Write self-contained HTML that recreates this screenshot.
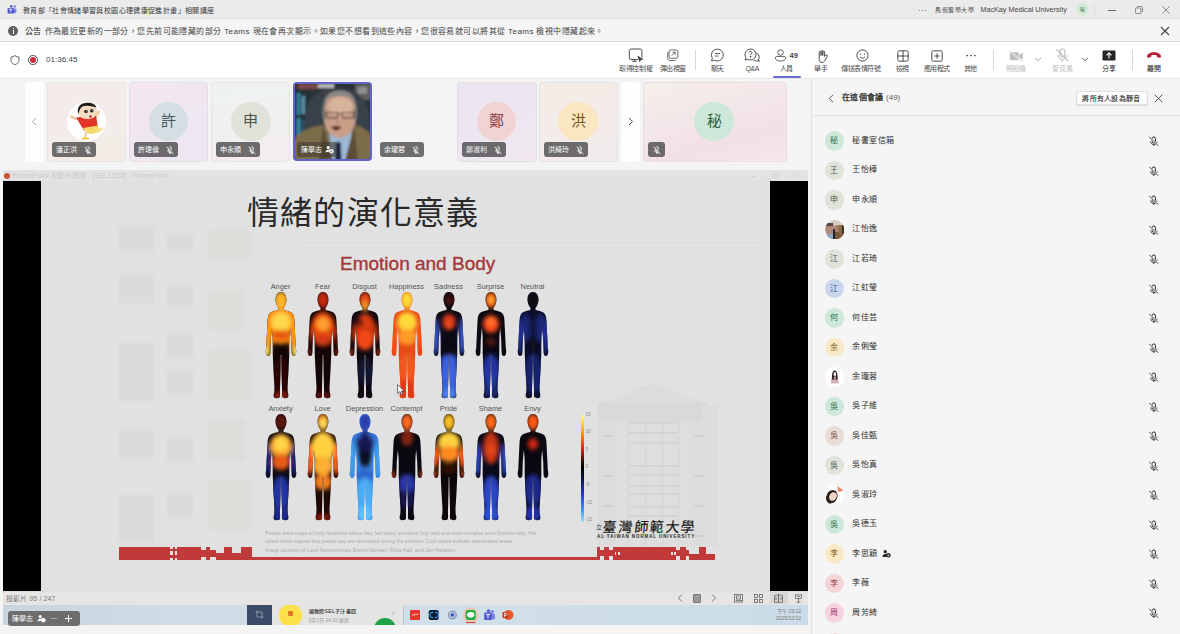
<!DOCTYPE html>
<html lang="zh-TW">
<head>
<meta charset="utf-8">
<style>
*{box-sizing:border-box;margin:0;padding:0}
html,body{width:1180px;height:634px;overflow:hidden;background:#f5f5f5;font-family:"Liberation Sans",sans-serif;color:#242424}
.a{position:absolute}
.t{white-space:nowrap;line-height:1}
/* title bar */
#titlebar{left:0;top:0;width:1180px;height:19px;background:#ebebeb;border-bottom:1px solid #e0e0e0}
#ann{left:0;top:19px;width:1180px;height:23px;background:#f5f5f5;border-bottom:1px solid #d6d6d6}
#tool{left:0;top:42px;width:1180px;height:37px;background:#fff;border-bottom:1px solid #e6e6e6}
#stage{left:0;top:79px;width:811px;height:555px;background:#f4f4f4}
#panel{left:811px;top:79px;width:369px;height:555px;background:#f5f5f5;border-left:1px solid #e3e3e3}
.lbl{font-size:7px;letter-spacing:-0.45px;text-indent:-0.45px;color:#4a4a4a;text-align:center;width:60px;margin-left:-30px}
.ico{width:16px;height:14px;margin-left:-8px}
.tile{position:absolute;top:82px;height:79.5px;border-radius:4px;overflow:hidden;border:1px solid rgba(0,0,0,0.04)}
.av{position:absolute;border-radius:50%;text-align:center;font-family:"Liberation Sans",sans-serif}
.pill{position:absolute;top:142px;height:14.5px;border-radius:3px;background:rgba(70,70,70,0.78);color:#fff;font-size:7px;line-height:16px;padding-left:4px;white-space:nowrap}
.mic{position:absolute}
.row{position:absolute;left:0;width:369px;height:29.5px}
.row .av{left:12.5px;top:5px;width:19.5px;height:19.5px;line-height:19px;font-size:8px}
.row .nm{position:absolute;left:40px;top:10.8px;font-size:8px;letter-spacing:0.6px;color:#2b2b2b;white-space:nowrap;line-height:1}

</style>
</head>
<body>
<!-- TITLE BAR -->
<div id="titlebar" class="a">
  <svg class="a" style="left:7px;top:5px" width="10" height="9" viewBox="0 0 10 9">
    <circle cx="7.8" cy="1.5" r="1.2" fill="#7b83eb"/>
    <path d="M6.2 3.5H9.4V6.5C9.4 7.6 8.6 8.4 7.6 8.4C6.8 8.4 6.2 7.8 6.2 7Z" fill="#7b83eb"/>
    <circle cx="4.3" cy="1.4" r="1.3" fill="#5b5fc7"/>
    <path d="M0.6 3.2H7V7.4C7 8 6.5 8.6 5.9 8.6H1.7C1.1 8.6 0.6 8 0.6 7.4Z" fill="#4f55c4"/>
    <path d="M2.3 4.6H5.2M3.75 4.6V7.4" stroke="#fff" stroke-width="0.8"/>
  </svg>
  <div class="a t" style="left:22.8px;top:6.5px;font-size:7px;letter-spacing:0.37px;color:#333">教育部「社會情緒學習與校園心理健康促進計畫」相關講座</div>
  <div class="a t" style="left:918px;top:6.5px;font-size:8px;color:#333;letter-spacing:0.3px">···</div>
  <div class="a t" style="left:935.3px;top:6.8px;font-size:6px;letter-spacing:0.5px;color:#444">馬偕醫學大學</div><div class="a t" style="left:980.5px;top:6px;font-size:7.2px;color:#444">MacKay Medical University</div><div class="a" style="left:1094px;top:4px;width:1px;height:11px;background:#dcdcdc"></div>
  <div class="a" style="left:1076px;top:3px;width:13px;height:13px;border-radius:50%;background:#d3eadb;font-size:5px;color:#2f6b46;text-align:center;line-height:13px">秘</div>
  <div class="a" style="left:1108px;top:9.5px;width:8px;height:0.8px;background:#666"></div>
  <svg class="a" style="left:1135px;top:6px" width="8" height="8" viewBox="0 0 8 8" fill="none" stroke="#777" stroke-width="0.8"><rect x="0.5" y="2" width="5.5" height="5.5" rx="0.8"/><path d="M2 2V1.5C2 0.9 2.4 0.5 3 0.5H6.5C7.1 0.5 7.5 0.9 7.5 1.5V5C7.5 5.6 7.1 6 6.5 6H6"/></svg>
  <svg class="a" style="left:1162px;top:5.5px" width="8" height="8" viewBox="0 0 8 8"><path d="M0.5 0.5L7.5 7.5M7.5 0.5L0.5 7.5" stroke="#777" stroke-width="0.8"/></svg>
</div>

<!-- ANNOUNCEMENT -->
<div id="ann" class="a">
  <div class="a" style="left:8px;top:7px;width:10px;height:10px;border-radius:50%;background:#616161"></div>
  <div class="a" style="left:12.5px;top:9px;width:1.2px;height:1.2px;background:#fff"></div>
  <div class="a" style="left:12.5px;top:11px;width:1.2px;height:4px;background:#fff"></div>
  <div class="a t" style="left:25px;top:9.2px;font-size:8px;letter-spacing:0.3px;color:#242424">公告</div>
  <div class="a t" style="left:44.5px;top:9.2px;font-size:8px;letter-spacing:0.43px;color:#424242">作為最近更新的一部分，您先前可能隱藏的部分 Teams 現在會再次顯示。如果您不想看到這些內容，您很容易就可以將其從 Teams 檢視中隱藏起來。</div>
  <svg class="a" style="left:1160px;top:7px" width="10" height="10" viewBox="0 0 10 10"><path d="M1 1L9 9M9 1L1 9" stroke="#444" stroke-width="1.1"/></svg>
</div>

<!-- TOOLBAR -->
<div id="tool" class="a">
  <svg class="a" style="left:9.5px;top:13px" width="10" height="10" viewBox="0 0 10 10"><path d="M5 0.6C6.2 1.5 7.6 2 9 2.1V5C9 7.3 7.5 8.8 5 9.6C2.5 8.8 1 7.3 1 5V2.1C2.4 2 3.8 1.5 5 0.6Z" fill="none" stroke="#555" stroke-width="0.9"/></svg>
  <div class="a" style="left:28px;top:13.2px;width:9.6px;height:9.6px;border-radius:50%;border:1.1px solid #4a4a4a"></div>
  <div class="a" style="left:29.6px;top:14.8px;width:6.4px;height:6.4px;border-radius:50%;background:#d0283c"></div>
  <div class="a t" style="left:46px;top:14px;font-size:8.1px;color:#424242">01:36:45</div>
  <!-- buttons -->
  <svg class="a" style="left:628px;top:6px" width="17" height="15" viewBox="0 0 17 15" fill="none" stroke="#424242" stroke-width="0.95">
    <rect x="1.3" y="1" width="12.6" height="10.5" rx="1.8"/><path d="M4.3 13.3H8.7M6.5 11.5V13.3"/>
    <path d="M9.2 7.6L15.6 11.3L12.9 11.9L11.7 14.5Z" fill="#424242" stroke="#fff" stroke-width="1.2" stroke-linejoin="round"/>
    <path d="M9.2 7.6L15.6 11.3L12.9 11.9L11.7 14.5Z" fill="#424242" stroke="none"/>
  </svg>
  <div class="a t lbl" style="left:636px;top:23px">取得控制權</div>
  <svg class="a" style="left:666px;top:7px" width="14" height="12.5" viewBox="0 0 16 14" fill="none" stroke="#424242" stroke-width="0.9">
    <rect x="3.5" y="1" width="10" height="9.5" rx="2"/><path d="M2 3.5V10.5C2 12 3 13 4.5 13H11"/><path d="M6.5 7.5L10.5 3.5M7.5 3.5H10.5V6.5"/>
  </svg>
  <div class="a t lbl" style="left:673px;top:23px">彈出視窗</div>
  <div class="a" style="left:695px;top:8px;width:1px;height:20px;background:#d6d6d6"></div>
  <svg class="a" style="left:710px;top:6px" width="15" height="14" viewBox="0 0 15 14" fill="none" stroke="#424242" stroke-width="0.9">
    <path d="M7.5 1A6 6 0 1 1 4.5 12.3L1.5 13L2.3 10.2A6 6 0 0 1 7.5 1Z"/><path d="M5 5.5H10M5 8H8.5"/>
  </svg>
  <div class="a t lbl" style="left:717.5px;top:23px">聊天</div>
  <svg class="a" style="left:744px;top:6px" width="17" height="14" viewBox="0 0 17 14" fill="none" stroke="#424242" stroke-width="0.9">
    <path d="M6.5 1A5.5 5.5 0 1 1 3.8 11.3L1.2 12L1.9 9.6A5.5 5.5 0 0 1 6.5 1Z"/><path d="M5 4.8C5 3.9 5.7 3.3 6.5 3.3S8 3.9 8 4.7C8 5.7 6.6 5.8 6.6 7"/><circle cx="6.6" cy="8.7" r="0.5" fill="#424242"/>
    <path d="M12.3 5A4.5 4.5 0 0 1 14 12.3L15.5 13L12.8 13C11.8 13 10.5 12.6 9.5 12"/>
  </svg>
  <div class="a t lbl" style="left:752.5px;top:23px">Q&amp;A</div>
  <svg class="a" style="left:774px;top:7px" width="13" height="13" viewBox="0 0 14 14" fill="none" stroke="#424242" stroke-width="0.9">
    <circle cx="7" cy="3.8" r="3"/><path d="M1.5 9.5C1.5 8.7 2.2 8 3 8H11C11.8 8 12.5 8.7 12.5 9.5C12.5 11.8 10.3 13 7 13S1.5 11.8 1.5 9.5Z"/>
  </svg>
  <div class="a t" style="left:789.5px;top:9.8px;font-size:7.5px;color:#424242;font-weight:bold">49</div>
  <div class="a t lbl" style="left:786.3px;top:23px">人員</div>
  <div class="a" style="left:773px;top:34.2px;width:28px;height:1.6px;background:#6a6ed0;border-radius:1px"></div>

  <svg class="a" style="left:815.5px;top:7.5px" width="13" height="13" viewBox="0 0 13 13" fill="none" stroke="#424242" stroke-width="0.95" stroke-linejoin="round">
    <path d="M3.2 7V2.2C3.2 1.6 3.6 1.2 4.1 1.2S5 1.6 5 2.2V5.5V1.4C5 0.9 5.4 0.5 5.9 0.5S6.8 0.9 6.8 1.4V5.5V2C6.8 1.5 7.2 1.1 7.7 1.1S8.6 1.5 8.6 2V6.5L9.6 5.2C10 4.7 10.7 4.7 11.1 5.1C11.4 5.4 11.4 5.9 11.2 6.3L9 10.6C8.3 11.8 7.2 12.5 5.9 12.5C4.3 12.5 3.2 11.2 3.2 9.6Z"/>
  </svg>
  <div class="a t lbl" style="left:821px;top:23px">舉手</div>
  <svg class="a" style="left:855.5px;top:7.2px" width="13" height="13" viewBox="0 0 13 13" fill="none" stroke="#424242" stroke-width="0.95">
    <circle cx="6.5" cy="6.5" r="5.6"/><circle cx="4.6" cy="5.2" r="0.6" fill="#424242" stroke="none"/><circle cx="8.4" cy="5.2" r="0.6" fill="#424242" stroke="none"/><path d="M4.1 7.9C4.7 8.8 5.5 9.2 6.5 9.2S8.3 8.8 8.9 7.9"/>
  </svg>
  <div class="a t lbl" style="left:861px;top:23px">傳送表情符號</div>
  <svg class="a" style="left:896.5px;top:8px" width="12" height="12" viewBox="0 0 12 12" fill="none" stroke="#424242" stroke-width="0.95">
    <rect x="0.8" y="0.8" width="10.4" height="10.4" rx="1.6"/><path d="M6 0.8V11.2M0.8 6H11.2"/>
  </svg>
  <div class="a t lbl" style="left:902.4px;top:23px">檢視</div>
  <svg class="a" style="left:931px;top:8px" width="12" height="12" viewBox="0 0 12 12" fill="none" stroke="#424242" stroke-width="0.95">
    <rect x="0.8" y="0.8" width="10.4" height="10.4" rx="1.6"/><path d="M6 3.4V8.6M3.4 6H8.6"/>
  </svg>
  <div class="a t lbl" style="left:937px;top:23px">應用程式</div>
  <svg class="a" style="left:966px;top:12.2px" width="10" height="3" viewBox="0 0 10 3"><circle cx="1.2" cy="1.5" r="0.85" fill="#424242"/><circle cx="5" cy="1.5" r="0.85" fill="#424242"/><circle cx="8.8" cy="1.5" r="0.85" fill="#424242"/></svg>
  <div class="a t lbl" style="left:970.7px;top:23px">其他</div>
  <div class="a" style="left:993px;top:8px;width:1px;height:20px;background:#d6d6d6"></div>
  <svg class="a" style="left:1009px;top:7.5px" width="15" height="12.5" viewBox="0 0 17 14">
    <rect x="1" y="2.5" width="10" height="9" rx="1.5" fill="#bdbdbd"/><path d="M11.5 5.5L15.5 3V11L11.5 8.5Z" fill="#bdbdbd"/><path d="M1 1L15 13" stroke="#fff" stroke-width="1.6"/><path d="M1 1L15 13" stroke="#bdbdbd" stroke-width="0.9"/>
  </svg>
  <div class="a t lbl" style="left:1015.8px;top:23px;color:#bdbdbd">照相機</div>
  <svg class="a" style="left:1034px;top:15px" width="8" height="5" viewBox="0 0 8 5"><path d="M1 1L4 3.6L7 1" fill="none" stroke="#9a9a9a" stroke-width="0.9"/></svg>
  <svg class="a" style="left:1055px;top:6px" width="15" height="15" viewBox="0 0 15 15" fill="none" stroke="#bdbdbd" stroke-width="1.1">
    <rect x="5" y="1" width="5" height="8" rx="2.5"/><path d="M3 7C3 9.5 5 11.5 7.5 11.5S12 9.5 12 7M7.5 11.5V14"/><path d="M1.5 1.5L13.5 13.5"/>
  </svg>
  <div class="a t lbl" style="left:1062.5px;top:23px;color:#bdbdbd">麥克風</div>
  <svg class="a" style="left:1081px;top:15px" width="8" height="5" viewBox="0 0 8 5"><path d="M1 1L4 3.6L7 1" fill="none" stroke="#555" stroke-width="0.9"/></svg>
  <svg class="a" style="left:1102px;top:8px" width="14" height="11" viewBox="0 0 14 11">
    <rect x="0.5" y="0.5" width="13" height="10" rx="1.2" fill="#242424"/><path d="M7 8.5V3M4.5 5.3L7 2.8L9.5 5.3" fill="none" stroke="#fff" stroke-width="1.1"/>
  </svg>
  <div class="a t lbl" style="left:1109px;top:23px;color:#242424">分享</div>
  <div class="a" style="left:1131.5px;top:8px;width:1px;height:20px;background:#d6d6d6"></div>
  <svg class="a" style="left:1146px;top:9px" width="16" height="8" viewBox="0 0 16 8">
    <path d="M1 5.2C1 3.3 4 1.2 8 1.2S15 3.3 15 5.2C15 6.2 14.5 6.8 13.8 6.7L11.5 6.3C10.9 6.2 10.6 5.7 10.6 5.1V4.3C9.1 3.9 6.9 3.9 5.4 4.3V5.1C5.4 5.7 5.1 6.2 4.5 6.3L2.2 6.7C1.5 6.8 1 6.2 1 5.2Z" fill="#b92434"/>
  </svg>
  <div class="a t lbl" style="left:1154px;top:23px;color:#242424">離開</div>
</div>

<!-- STAGE -->
<div id="stage" class="a"></div>
<!--STRIP-->
<div class="a" style="left:25px;top:82px;width:19px;height:79.5px;background:#fdfdfd;border-radius:3px"></div>
<svg class="a" style="left:31px;top:117px" width="6" height="9" viewBox="0 0 6 9"><path d="M5 1L1.5 4.5L5 8" fill="none" stroke="#9e9e9e" stroke-width="0.9"/></svg>
<div class="tile" style="left:47px;width:78.5px;background:linear-gradient(160deg,#f5ece9 0%,#f3ecea 50%,#f3ede4 100%)"></div>
<div class="av" style="left:67px;top:102px;width:39px;height:39px;background:#fff"></div>
<svg class="a" style="left:67px;top:102px" width="39" height="39" viewBox="0 0 39 39">
  <path d="M9 17L4 14.5" stroke="#f2cfa8" stroke-width="2.6" stroke-linecap="round"/>
  <path d="M28 16L32 9.5" stroke="#f2cfa8" stroke-width="2.6" stroke-linecap="round"/>
  <path d="M9 15.5L29 13.5L31 26L17 28.5L13 22Z" fill="#e3342c"/>
  <path d="M16 26L31 23.5L33 30L24 32L20 31Z" fill="#f3da6a"/>
  <path d="M19 30L18 36" stroke="#f2cfa8" stroke-width="2.2"/>
  <path d="M16 36.5H21" stroke="#f4c838" stroke-width="2.2" stroke-linecap="round"/>
  <path d="M30 29L35 27" stroke="#f2e080" stroke-width="2.4" stroke-linecap="round"/>
  <path d="M11 9C11 3.5 15.5 1 20.5 1C26 1 30 4 30 9C30 14.5 26 17 20.5 17C15 17 11 14.5 11 9Z" fill="#f6dcc0"/>
  <path d="M10.8 10C10.5 4 14 1 20 0.8C25 0.6 28.5 2.5 29.5 5.5C27 4.5 24.5 4.6 22 4C18 3.5 15 4 13.5 6.5C12.5 8 12 9.5 11.5 12Z" fill="#1e1e1e"/>
  <ellipse cx="19" cy="9.4" rx="1.8" ry="1.7" fill="#1e1e1e"/><ellipse cx="24.8" cy="8.8" rx="1.8" ry="1.7" fill="#1e1e1e"/>
  <circle cx="19.3" cy="9" r="0.5" fill="#fff"/><circle cx="25.1" cy="8.4" r="0.5" fill="#fff"/>
  <ellipse cx="23.5" cy="14.5" rx="1.1" ry="1.5" fill="#b8282a"/>
</svg>
<div class="pill" style="left:52px;width:43.5px">潘正洪<div class="a" style="left:31.5px;top:3px"><svg width="8" height="9" viewBox="0 0 8 9" fill="none" stroke="#fff" stroke-width="0.9"><path d="M3 1.3C3.3 0.8 3.6 0.6 4 0.6C4.7 0.6 5.2 1.2 5.2 1.9V4.3M2.8 3V4.3C2.8 5 3.3 5.5 4 5.5"/><path d="M1.8 4.3C1.8 5.6 2.8 6.6 4 6.6C4.6 6.6 5.1 6.4 5.5 6M4 6.6V8.2"/><path d="M0.8 0.8L7.2 8.2"/></svg></div></div>

<div class="tile" style="left:128.8px;width:79.2px;background:linear-gradient(135deg,#f6e7f2 0%,#f0e6f0 45%,#ece8f2 100%)"></div>
<div class="av" style="left:148.5px;top:101.5px;width:39.5px;height:39.5px;line-height:37.8px;background:#d4dfe4;color:#44565f;font-size:15px">許</div>
<div class="pill" style="left:133.5px;width:44px">許瑋倫<div class="a" style="left:32px;top:3px"><svg width="8" height="9" viewBox="0 0 8 9" fill="none" stroke="#fff" stroke-width="0.9"><path d="M3 1.3C3.3 0.8 3.6 0.6 4 0.6C4.7 0.6 5.2 1.2 5.2 1.9V4.3M2.8 3V4.3C2.8 5 3.3 5.5 4 5.5"/><path d="M1.8 4.3C1.8 5.6 2.8 6.6 4 6.6C4.6 6.6 5.1 6.4 5.5 6M4 6.6V8.2"/><path d="M0.8 0.8L7.2 8.2"/></svg></div></div>

<div class="tile" style="left:211px;width:79px;background:linear-gradient(175deg,#eef2f3 0%,#f0f0f0 50%,#f4ebee 100%)"></div>
<div class="av" style="left:231px;top:101.5px;width:39.5px;height:39.5px;line-height:37.8px;background:#dfe3d9;color:#485446;font-size:15px">申</div>
<div class="pill" style="left:216px;width:44px">申永順<div class="a" style="left:32px;top:3px"><svg width="8" height="9" viewBox="0 0 8 9" fill="none" stroke="#fff" stroke-width="0.9"><path d="M3 1.3C3.3 0.8 3.6 0.6 4 0.6C4.7 0.6 5.2 1.2 5.2 1.9V4.3M2.8 3V4.3C2.8 5 3.3 5.5 4 5.5"/><path d="M1.8 4.3C1.8 5.6 2.8 6.6 4 6.6C4.6 6.6 5.1 6.4 5.5 6M4 6.6V8.2"/><path d="M0.8 0.8L7.2 8.2"/></svg></div></div>

<div class="a" style="left:292.5px;top:82.2px;width:79.4px;height:78.6px;border:2px solid #6264c9;border-radius:4px;overflow:hidden;background:#2e333a">
<svg class="a" style="left:0;top:0" width="76" height="75" viewBox="0 0 76 75">
<defs><filter id="vb" x="-20%" y="-20%" width="140%" height="140%"><feGaussianBlur stdDeviation="0.8"/></filter></defs>
<g filter="url(#vb)">
<rect x="-2" y="-2" width="80" height="79" fill="#2c3036"/>
<rect x="0" y="6" width="14" height="60" fill="#283038"/>
<rect x="1.5" y="9" width="4" height="22" fill="#2f7e9a"/><rect x="6.5" y="12" width="3.5" height="18" fill="#5b8ea4"/>
<rect x="1.5" y="34" width="4" height="22" fill="#3588a6"/><rect x="6.5" y="36" width="3.5" height="18" fill="#2a5668"/>
<rect x="3" y="0" width="20" height="5" fill="#7a4848"/><rect x="23" y="0" width="16" height="4" fill="#b8b8b8"/>
<rect x="60" y="0" width="16" height="16" fill="#5e5e5e"/><rect x="63" y="3" width="9" height="7" fill="#8e8e8e"/>
<path d="M9 75V40C9 18 20 4 42 4C64 4 75 18 75 40V75Z" fill="#383f49"/>
<path d="M-2 77V56C6 46 18 42 28 41L36 48H54L61 41C68 43 74 47 78 54V77Z" fill="#7c6c4a"/>
<path d="M34 46L57 46L54 77H37Z" fill="#9db8d6"/>
<path d="M40.5 58H45.8L46.5 77H40Z" fill="#1c2540"/>
<path d="M28 42L38 77H24Z" fill="#5c4e36"/><path d="M59 42L50 77H63Z" fill="#5c4e36"/>
<ellipse cx="44.8" cy="31" rx="16.5" ry="23" fill="#c99f88"/>
<ellipse cx="45.5" cy="22" rx="12" ry="9" fill="#d8b39c"/>
<path d="M28.3 26C27.5 13 34 6.5 44.8 6.5C55.6 6.5 62 13 61.3 26C59.5 18 57 14.5 52 13C47 11.5 40 12 35 14C31 16 29.5 20 28.3 26Z" fill="#8a8784"/>
<path d="M28.5 20C26.5 26 27 34 29.5 38L31.5 29Z" fill="#7c7874"/><path d="M61 20C63 26 62.5 34 60 38L58 29Z" fill="#7c7874"/>
<path d="M31 28.5H43L42.2 34H32ZM47 28.5H59L58 34H47.8Z" fill="none" stroke="#3a2c28" stroke-width="1"/>
<path d="M43 29.5H47" stroke="#3a2c28" stroke-width="0.8"/>
<path d="M36 43C39 47.5 44 47.5 46.5 43C43.5 41.5 39 41.5 36 43Z" fill="#5a2e2a"/>
<path d="M43 34L41.5 39.5L45 40" fill="none" stroke="#a47a68" stroke-width="0.8"/>
</g>
</svg>
</div>
<div class="pill" style="left:297px;width:40px;background:rgba(60,55,45,0.55)">陳學志<svg class="a" style="left:28px;top:3px" width="9" height="9" viewBox="0 0 9 9"><circle cx="3.2" cy="2.6" r="1.6" fill="#fff"/><path d="M0.5 7.5C0.5 5.8 1.6 4.8 3.2 4.8S5.5 5.5 5.8 6" fill="#fff"/><circle cx="6.3" cy="6.3" r="2.3" fill="#fff"/><path d="M6.3 5V7.3M5.4 6.4L6.3 7.3L7.2 6.4" stroke="#555" stroke-width="0.6" fill="none"/></svg></div>
<div class="pill" style="left:380.3px;width:43.7px">余瓏蓉<div class="a" style="left:32px;top:3px"><svg width="8" height="9" viewBox="0 0 8 9" fill="none" stroke="#fff" stroke-width="0.9"><path d="M3 1.3C3.3 0.8 3.6 0.6 4 0.6C4.7 0.6 5.2 1.2 5.2 1.9V4.3M2.8 3V4.3C2.8 5 3.3 5.5 4 5.5"/><path d="M1.8 4.3C1.8 5.6 2.8 6.6 4 6.6C4.6 6.6 5.1 6.4 5.5 6M4 6.6V8.2"/><path d="M0.8 0.8L7.2 8.2"/></svg></div></div>

<div class="tile" style="left:456.5px;width:80px;background:linear-gradient(150deg,#ece6f1 0%,#ebe6f2 50%,#f2e9ee 100%)"></div>
<div class="av" style="left:476.8px;top:101.5px;width:39.5px;height:39.5px;line-height:37.8px;background:#f2d3d4;color:#8a3d45;font-size:15px">鄭</div>
<div class="pill" style="left:462px;width:44px">鄭淑利<div class="a" style="left:32px;top:3px"><svg width="8" height="9" viewBox="0 0 8 9" fill="none" stroke="#fff" stroke-width="0.9"><path d="M3 1.3C3.3 0.8 3.6 0.6 4 0.6C4.7 0.6 5.2 1.2 5.2 1.9V4.3M2.8 3V4.3C2.8 5 3.3 5.5 4 5.5"/><path d="M1.8 4.3C1.8 5.6 2.8 6.6 4 6.6C4.6 6.6 5.1 6.4 5.5 6M4 6.6V8.2"/><path d="M0.8 0.8L7.2 8.2"/></svg></div></div>

<div class="tile" style="left:539px;width:78.6px;background:linear-gradient(160deg,#f6ece6 0%,#f3ece8 50%,#f2ebee 100%)"></div>
<div class="av" style="left:558.3px;top:101.5px;width:39.5px;height:39.5px;line-height:37.8px;background:#fae7c2;color:#6f5522;font-size:15px">洪</div>
<div class="pill" style="left:544.3px;width:43.7px">洪綺玲<div class="a" style="left:32px;top:3px"><svg width="8" height="9" viewBox="0 0 8 9" fill="none" stroke="#fff" stroke-width="0.9"><path d="M3 1.3C3.3 0.8 3.6 0.6 4 0.6C4.7 0.6 5.2 1.2 5.2 1.9V4.3M2.8 3V4.3C2.8 5 3.3 5.5 4 5.5"/><path d="M1.8 4.3C1.8 5.6 2.8 6.6 4 6.6C4.6 6.6 5.1 6.4 5.5 6M4 6.6V8.2"/><path d="M0.8 0.8L7.2 8.2"/></svg></div></div>

<div class="a" style="left:621px;top:82px;width:19px;height:79.5px;background:#fdfdfd;border-radius:3px"></div>
<svg class="a" style="left:628px;top:117px" width="6" height="9" viewBox="0 0 6 9"><path d="M1 1L4.5 4.5L1 8" fill="none" stroke="#424242" stroke-width="0.9"/></svg>
<div class="tile" style="left:643.4px;width:143.3px;background:linear-gradient(165deg,#f6efea 0%,#f3e7e9 40%,#f2e0e6 70%,#f4e7eb 100%)"></div>
<div class="av" style="left:694.3px;top:101.5px;width:39.5px;height:39.5px;line-height:37.8px;background:#cde8d9;color:#2c6242;font-size:15px">秘</div>
<div class="pill" style="left:648px;width:17px;padding:0"><div class="a" style="left:4.5px;top:3px"><svg width="8" height="9" viewBox="0 0 8 9" fill="none" stroke="#fff" stroke-width="0.9"><path d="M3 1.3C3.3 0.8 3.6 0.6 4 0.6C4.7 0.6 5.2 1.2 5.2 1.9V4.3M2.8 3V4.3C2.8 5 3.3 5.5 4 5.5"/><path d="M1.8 4.3C1.8 5.6 2.8 6.6 4 6.6C4.6 6.6 5.1 6.4 5.5 6M4 6.6V8.2"/><path d="M0.8 0.8L7.2 8.2"/></svg></div></div>
<!--/STRIP-->
<!--PPT-->
<div class="a" style="left:3px;top:170px;width:805px;height:455px;background:#e2e2e2;overflow:hidden">
</div>
<div class="a" style="left:3px;top:170px;width:805px;height:11px;background:#e3e3e3"></div>
<div class="a" style="left:3.5px;top:172.5px;width:6.5px;height:6.5px;border-radius:50%;background:#d35230"></div>
<div class="a t" style="left:12px;top:172px;font-size:7.2px;color:#c8cbd0">PowerPoint 投影片放映 - [SEL1212] - PowerPoint</div>
<div class="a" style="left:751px;top:175.5px;width:5px;height:0.7px;background:#d2d2d2"></div>
<svg class="a" style="left:773px;top:173px" width="6" height="5" viewBox="0 0 6 5" fill="none" stroke="#d0d0d0" stroke-width="0.7"><rect x="0.4" y="1.4" width="3.6" height="3.2"/><path d="M1.6 1.4V0.4H5.6V3.6H4"/></svg>
<svg class="a" style="left:795px;top:173px" width="5" height="5" viewBox="0 0 5 5"><path d="M0 0L5 5M5 0L0 5" stroke="#d0d0d0" stroke-width="0.7"/></svg>
<div class="a" style="left:3px;top:181px;width:38.6px;height:410px;background:#000"></div>
<div class="a" style="left:770px;top:181px;width:38px;height:410px;background:#000"></div>
<div class="a" style="left:41px;top:181px;width:729px;height:410px;background:#e1e1e1;overflow:hidden">
<svg class="a" style="left:0;top:0" width="729" height="410" viewBox="0 0 729 410"><defs><filter id="wb"><feGaussianBlur stdDeviation="1.2"/></filter></defs><g filter="url(#wb)" fill="#dbdbdb">
<rect x="77.7" y="45.0" width="35.3" height="26.0"/>
<rect x="77.7" y="94.0" width="35.3" height="29.0"/>
<rect x="77.7" y="162.0" width="35.3" height="58.0"/>
<rect x="77.7" y="249.0" width="35.3" height="29.0"/>
<rect x="77.7" y="314.0" width="35.3" height="48.0"/>
<rect x="126.0" y="52.0" width="26.0" height="19.0"/>
<rect x="126.0" y="104.0" width="26.0" height="22.0"/>
<rect x="126.0" y="152.0" width="26.0" height="26.0"/>
<rect x="126.0" y="188.0" width="26.0" height="26.0"/>
<rect x="126.0" y="256.0" width="26.0" height="26.0"/>
<rect x="126.0" y="311.0" width="26.0" height="25.0"/>
<rect x="168.0" y="49.0" width="41.0" height="30.0" fill="#dfddda"/>
<rect x="168.0" y="109.0" width="36.0" height="40.0" fill="#dfddda"/>
<rect x="168.0" y="169.0" width="41.0" height="50.0" fill="#dfddda"/>
<rect x="168.0" y="239.0" width="36.0" height="40.0" fill="#dfddda"/>
<rect x="168.0" y="299.0" width="41.0" height="50.0" fill="#dfddda"/>
</g></svg>
</div>
<div class="a" style="left:300px;top:242.3px;width:466px;height:1px;background:#d6d6d6;opacity:.5"></div>
<div class="a t" style="left:247px;top:196.5px;font-size:32px;letter-spacing:1.2px;color:#2a2a2a;font-family:'Liberation Serif',serif">情緒的演化意義</div>
<div class="a t" style="left:340px;top:253.6px;font-size:19px;color:#a3383a;-webkit-text-stroke:0.35px #a3383a">Emotion and Body</div>
<div class="a t" style="left:250.5px;top:282.5px;width:60px;text-align:center;font-size:7.4px;color:#555">Anger</div>
<div class="a t" style="left:250.5px;top:404.5px;width:60px;text-align:center;font-size:7.4px;color:#555">Anxiety</div>
<div class="a t" style="left:292.5px;top:282.5px;width:60px;text-align:center;font-size:7.4px;color:#555">Fear</div>
<div class="a t" style="left:292.5px;top:404.5px;width:60px;text-align:center;font-size:7.4px;color:#555">Love</div>
<div class="a t" style="left:334.5px;top:282.5px;width:60px;text-align:center;font-size:7.4px;color:#555">Disgust</div>
<div class="a t" style="left:334.5px;top:404.5px;width:60px;text-align:center;font-size:7.4px;color:#555">Depression</div>
<div class="a t" style="left:376.5px;top:282.5px;width:60px;text-align:center;font-size:7.4px;color:#555">Happiness</div>
<div class="a t" style="left:376.5px;top:404.5px;width:60px;text-align:center;font-size:7.4px;color:#555">Contempt</div>
<div class="a t" style="left:418.5px;top:282.5px;width:60px;text-align:center;font-size:7.4px;color:#555">Sadness</div>
<div class="a t" style="left:418.5px;top:404.5px;width:60px;text-align:center;font-size:7.4px;color:#555">Pride</div>
<div class="a t" style="left:460.5px;top:282.5px;width:60px;text-align:center;font-size:7.4px;color:#555">Surprise</div>
<div class="a t" style="left:460.5px;top:404.5px;width:60px;text-align:center;font-size:7.4px;color:#555">Shame</div>
<div class="a t" style="left:502.5px;top:282.5px;width:60px;text-align:center;font-size:7.4px;color:#555">Neutral</div>
<div class="a t" style="left:502.5px;top:404.5px;width:60px;text-align:center;font-size:7.4px;color:#555">Envy</div>
<svg class="a" width="0" height="0"><defs><clipPath id="bodyclip"><path transform="translate(2.16,0) scale(0.88,0.99)" d="M18 0C22 0 24.2 3.2 24.2 7.6C24.2 11.5 22.4 14.6 20.8 15.8L20.9 18.3C24.5 19.2 28.6 19.6 30.6 21.2C32.6 22.8 33 25.5 33.3 29L34.3 47L34.8 56.5C35.8 59.5 35.6 63.6 33.3 64.6C31.2 65.2 29.9 63 30 60.5L29.6 48L28.4 36L27.6 44C27.3 50 27.5 56 27.4 62L26.6 78L25.4 96L25.6 101C26.4 103 26.7 105.5 25.8 106.6C24.4 107.6 20.5 107.4 19.4 106.4C18.8 104 19.2 101 19.2 99L18.6 80L18.3 64L18 63.5L17.7 64L17.4 80L16.8 99C16.8 101 17.2 104 16.6 106.4C15.5 107.4 11.6 107.6 10.2 106.6C9.3 105.5 9.6 103 10.4 101L10.6 96L9.4 78L8.6 62C8.5 56 8.7 50 8.4 44L7.6 36L6.4 48L6 60.5C6.1 63 4.8 65.2 2.7 64.6C0.4 63.6 0.2 59.5 1.2 56.5L1.7 47L2.7 29C3 25.5 3.4 22.8 5.4 21.2C7.4 19.6 11.5 19.2 15.1 18.3L15.2 15.8C13.6 14.6 11.8 11.5 11.8 7.6C11.8 3.2 14 0 18 0Z"/></clipPath><filter id="blur" x="-50%" y="-50%" width="200%" height="200%"><feGaussianBlur stdDeviation="2.2"/></filter></defs></svg>
<svg class="a" style="left:262.5px;top:291.5px;overflow:visible" width="36" height="108" viewBox="0 0 36 108"><g clip-path="url(#bodyclip)"><rect x="-2" y="-2" width="40" height="112" fill="#120606"/><g filter="url(#blur)"><ellipse cx="18" cy="32" rx="20" ry="20" fill="#ff8a12" opacity="1"/><ellipse cx="18" cy="8" rx="7" ry="9" fill="#ffb52a" opacity="1"/><ellipse cx="18" cy="30" rx="10" ry="10" fill="#ffd84a" opacity="1"/><ellipse cx="4" cy="48" rx="5" ry="16" fill="#ff9a18" opacity="1"/><ellipse cx="32" cy="48" rx="5" ry="16" fill="#ff9a18" opacity="1"/><ellipse cx="3" cy="60" rx="4" ry="6" fill="#ffe060" opacity="1"/><ellipse cx="33" cy="60" rx="4" ry="6" fill="#ffe060" opacity="1"/><ellipse cx="18" cy="43" rx="11" ry="5" fill="#e85a10" opacity="1"/><ellipse cx="18" cy="85" rx="8" ry="20" fill="#3a0a08" opacity="0.6"/><ellipse cx="18" cy="104" rx="9" ry="4" fill="#a02010" opacity="0.8"/></g></g></svg>
<svg class="a" style="left:262.5px;top:413.5px;overflow:visible" width="36" height="108" viewBox="0 0 36 108"><g clip-path="url(#bodyclip)"><rect x="-2" y="-2" width="40" height="112" fill="#0a0a14"/><g filter="url(#blur)"><ellipse cx="18" cy="8" rx="6" ry="8" fill="#5a1810" opacity="1"/><ellipse cx="18" cy="32" rx="11" ry="12" fill="#ffb030" opacity="1"/><ellipse cx="18" cy="30" rx="6" ry="7" fill="#ffd84a" opacity="1"/><ellipse cx="18" cy="48" rx="9" ry="8" fill="#e85a14" opacity="1"/><ellipse cx="4" cy="45" rx="4" ry="16" fill="#1a2480" opacity="1"/><ellipse cx="32" cy="45" rx="4" ry="16" fill="#1a2480" opacity="1"/><ellipse cx="18" cy="80" rx="9" ry="18" fill="#2234a8" opacity="1"/><ellipse cx="18" cy="100" rx="9" ry="8" fill="#1c2a90" opacity="1"/></g></g></svg>
<svg class="a" style="left:304.5px;top:291.5px;overflow:visible" width="36" height="108" viewBox="0 0 36 108"><g clip-path="url(#bodyclip)"><rect x="-2" y="-2" width="40" height="112" fill="#140606"/><g filter="url(#blur)"><ellipse cx="18" cy="8" rx="6" ry="8" fill="#c82a10" opacity="1"/><ellipse cx="18" cy="36" rx="12" ry="16" fill="#e84a10" opacity="1"/><ellipse cx="18" cy="32" rx="7" ry="7" fill="#ffa030" opacity="1"/><ellipse cx="18" cy="48" rx="9" ry="6" fill="#d83a12" opacity="1"/><ellipse cx="4" cy="44" rx="3" ry="10" fill="#5a1208" opacity="1"/><ellipse cx="32" cy="44" rx="3" ry="10" fill="#5a1208" opacity="1"/><ellipse cx="3" cy="61" rx="3" ry="4" fill="#a02a10" opacity="0.8"/><ellipse cx="33" cy="61" rx="3" ry="4" fill="#a02a10" opacity="0.8"/><ellipse cx="18" cy="104" rx="9" ry="4" fill="#6a1410" opacity="0.8"/></g></g></svg>
<svg class="a" style="left:304.5px;top:413.5px;overflow:visible" width="36" height="108" viewBox="0 0 36 108"><g clip-path="url(#bodyclip)"><rect x="-2" y="-2" width="40" height="112" fill="#200806"/><g filter="url(#blur)"><ellipse cx="18" cy="8" rx="6" ry="8" fill="#ffa82a" opacity="1"/><ellipse cx="18" cy="10" rx="4" ry="5" fill="#ffe060" opacity="1"/><ellipse cx="18" cy="34" rx="12" ry="16" fill="#ffd040" opacity="1"/><ellipse cx="18" cy="52" rx="10" ry="10" fill="#ffb030" opacity="1"/><ellipse cx="4" cy="45" rx="4" ry="16" fill="#ff5a20" opacity="1"/><ellipse cx="32" cy="45" rx="4" ry="16" fill="#ff5a20" opacity="1"/><ellipse cx="18" cy="68" rx="9" ry="8" fill="#f08020" opacity="1"/><ellipse cx="18" cy="104" rx="9" ry="4" fill="#a02010" opacity="0.8"/></g></g></svg>
<svg class="a" style="left:346.5px;top:291.5px;overflow:visible" width="36" height="108" viewBox="0 0 36 108"><g clip-path="url(#bodyclip)"><rect x="-2" y="-2" width="40" height="112" fill="#100810"/><g filter="url(#blur)"><ellipse cx="18" cy="8" rx="6" ry="8" fill="#e84812" opacity="1"/><ellipse cx="18" cy="14" rx="4" ry="5" fill="#ff9a28" opacity="1"/><ellipse cx="18" cy="40" rx="11" ry="18" fill="#d03810" opacity="1"/><ellipse cx="18" cy="48" rx="8" ry="10" fill="#f04a14" opacity="1"/><ellipse cx="18" cy="28" rx="6" ry="6" fill="#e04010" opacity="0.8"/><ellipse cx="12" cy="30" rx="4" ry="5" fill="#401008" opacity="0.8"/><ellipse cx="4" cy="42" rx="3" ry="10" fill="#601810" opacity="1"/><ellipse cx="32" cy="42" rx="3" ry="10" fill="#601810" opacity="1"/><ellipse cx="3" cy="61" rx="3" ry="4" fill="#c04010" opacity="0.9"/><ellipse cx="33" cy="61" rx="3" ry="4" fill="#c04010" opacity="0.9"/><ellipse cx="18" cy="80" rx="9" ry="14" fill="#141a3a" opacity="0.7"/></g></g></svg>
<svg class="a" style="left:346.5px;top:413.5px;overflow:visible" width="36" height="108" viewBox="0 0 36 108"><g clip-path="url(#bodyclip)"><rect x="-2" y="-2" width="40" height="112" fill="#3a78d8"/><g filter="url(#blur)"><ellipse cx="18" cy="8" rx="6" ry="8" fill="#2a3aa8" opacity="1"/><ellipse cx="18" cy="20" rx="4" ry="3" fill="#1a2470" opacity="1"/><ellipse cx="4" cy="45" rx="5" ry="18" fill="#40a0f0" opacity="1"/><ellipse cx="32" cy="45" rx="5" ry="18" fill="#40a0f0" opacity="1"/><ellipse cx="18" cy="38" rx="7" ry="15" fill="#0a0c20" opacity="1"/><ellipse cx="18" cy="30" rx="9" ry="8" fill="#141a50" opacity="0.9"/><ellipse cx="18" cy="62" rx="9" ry="5" fill="#2a60c8" opacity="1"/><ellipse cx="18" cy="82" rx="10" ry="18" fill="#48aef6" opacity="1"/><ellipse cx="18" cy="100" rx="9" ry="8" fill="#60c0ff" opacity="1"/></g></g></svg>
<svg class="a" style="left:388.5px;top:291.5px;overflow:visible" width="36" height="108" viewBox="0 0 36 108"><g clip-path="url(#bodyclip)"><rect x="-2" y="-2" width="40" height="112" fill="#e84818"/><g filter="url(#blur)"><ellipse cx="18" cy="8" rx="6.5" ry="9" fill="#ffd838" opacity="1"/><ellipse cx="18" cy="30" rx="10" ry="10" fill="#ffd838" opacity="1"/><ellipse cx="18" cy="45" rx="10" ry="8" fill="#ff9a28" opacity="1"/><ellipse cx="4" cy="45" rx="4" ry="14" fill="#ff4a18" opacity="1"/><ellipse cx="32" cy="45" rx="4" ry="14" fill="#ff4a18" opacity="1"/><ellipse cx="18" cy="75" rx="9" ry="14" fill="#f0581a" opacity="1"/><ellipse cx="18" cy="98" rx="9" ry="10" fill="#e03a12" opacity="1"/></g></g></svg>
<svg class="a" style="left:388.5px;top:413.5px;overflow:visible" width="36" height="108" viewBox="0 0 36 108"><g clip-path="url(#bodyclip)"><rect x="-2" y="-2" width="40" height="112" fill="#0a0810"/><g filter="url(#blur)"><ellipse cx="18" cy="8" rx="6" ry="8" fill="#ff6a20" opacity="1"/><ellipse cx="18" cy="24" rx="6" ry="8" fill="#a02a10" opacity="0.8"/><ellipse cx="3" cy="61" rx="3" ry="4" fill="#c04018" opacity="0.9"/><ellipse cx="33" cy="61" rx="3" ry="4" fill="#c04018" opacity="0.9"/><ellipse cx="18" cy="70" rx="9" ry="10" fill="#2a38a8" opacity="1"/><ellipse cx="18" cy="85" rx="8" ry="10" fill="#1a2070" opacity="0.6"/></g></g></svg>
<svg class="a" style="left:430.5px;top:291.5px;overflow:visible" width="36" height="108" viewBox="0 0 36 108"><g clip-path="url(#bodyclip)"><rect x="-2" y="-2" width="40" height="112" fill="#0c0a14"/><g filter="url(#blur)"><ellipse cx="18" cy="6" rx="6" ry="8" fill="#1a0808" opacity="1"/><ellipse cx="18" cy="9" rx="3" ry="3" fill="#701810" opacity="0.8"/><ellipse cx="18" cy="30" rx="6.5" ry="8" fill="#e03a18" opacity="1"/><ellipse cx="18" cy="33" rx="3.5" ry="4" fill="#f05020" opacity="0.8"/><ellipse cx="4" cy="44" rx="4" ry="18" fill="#3a58d0" opacity="1"/><ellipse cx="32" cy="44" rx="4" ry="18" fill="#3a58d0" opacity="1"/><ellipse cx="18" cy="68" rx="9" ry="6" fill="#2f50c8" opacity="1"/><ellipse cx="18" cy="84" rx="10" ry="20" fill="#3a60e0" opacity="1"/><ellipse cx="18" cy="102" rx="9" ry="6" fill="#4a80f0" opacity="1"/></g></g></svg>
<svg class="a" style="left:430.5px;top:413.5px;overflow:visible" width="36" height="108" viewBox="0 0 36 108"><g clip-path="url(#bodyclip)"><rect x="-2" y="-2" width="40" height="112" fill="#0c0808"/><g filter="url(#blur)"><ellipse cx="18" cy="8" rx="6" ry="8" fill="#ffc028" opacity="1"/><ellipse cx="18" cy="28" rx="11" ry="10" fill="#ffd040" opacity="1"/><ellipse cx="18" cy="40" rx="10" ry="8" fill="#ff8a20" opacity="1"/><ellipse cx="4" cy="42" rx="4" ry="12" fill="#ff5a18" opacity="1"/><ellipse cx="32" cy="42" rx="4" ry="12" fill="#ff5a18" opacity="1"/><ellipse cx="3" cy="60" rx="3" ry="4" fill="#e05018" opacity="0.9"/><ellipse cx="33" cy="60" rx="3" ry="4" fill="#e05018" opacity="0.9"/><ellipse cx="18" cy="55" rx="8" ry="5" fill="#401008" opacity="0.7"/></g></g></svg>
<svg class="a" style="left:472.5px;top:291.5px;overflow:visible" width="36" height="108" viewBox="0 0 36 108"><g clip-path="url(#bodyclip)"><rect x="-2" y="-2" width="40" height="112" fill="#0a0810"/><g filter="url(#blur)"><ellipse cx="18" cy="8" rx="6" ry="8" fill="#ff5a16" opacity="1"/><ellipse cx="18" cy="8" rx="3" ry="4" fill="#ffb030" opacity="1"/><ellipse cx="18" cy="32" rx="8" ry="9" fill="#ff4a1a" opacity="1"/><ellipse cx="18" cy="30" rx="4" ry="4" fill="#ff7a30" opacity="0.9"/><ellipse cx="18" cy="50" rx="5" ry="4" fill="#601a10" opacity="0.8"/><ellipse cx="18" cy="80" rx="9" ry="18" fill="#2434a0" opacity="1"/><ellipse cx="18" cy="100" rx="9" ry="6" fill="#20308a" opacity="0.8"/></g></g></svg>
<svg class="a" style="left:472.5px;top:413.5px;overflow:visible" width="36" height="108" viewBox="0 0 36 108"><g clip-path="url(#bodyclip)"><rect x="-2" y="-2" width="40" height="112" fill="#0a0a18"/><g filter="url(#blur)"><ellipse cx="18" cy="8" rx="6" ry="8" fill="#ff6a16" opacity="1"/><ellipse cx="18" cy="34" rx="8" ry="16" fill="#c83414" opacity="1"/><ellipse cx="18" cy="36" rx="4" ry="6" fill="#e85020" opacity="0.8"/><ellipse cx="4" cy="45" rx="4" ry="16" fill="#2a48c8" opacity="1"/><ellipse cx="32" cy="45" rx="4" ry="16" fill="#2a48c8" opacity="1"/><ellipse cx="18" cy="80" rx="9" ry="18" fill="#2a44c8" opacity="1"/><ellipse cx="18" cy="100" rx="9" ry="8" fill="#2a50d8" opacity="1"/></g></g></svg>
<svg class="a" style="left:514.5px;top:291.5px;overflow:visible" width="36" height="108" viewBox="0 0 36 108"><g clip-path="url(#bodyclip)"><rect x="-2" y="-2" width="40" height="112" fill="#0c0e28"/><g filter="url(#blur)"><ellipse cx="18" cy="8" rx="6" ry="8" fill="#080808" opacity="1"/><ellipse cx="10" cy="36" rx="6" ry="14" fill="#1e2a80" opacity="0.9"/><ellipse cx="26" cy="36" rx="6" ry="14" fill="#1e2a80" opacity="0.9"/><ellipse cx="18" cy="45" rx="3" ry="20" fill="#0a0a18" opacity="0.9"/><ellipse cx="4" cy="45" rx="4" ry="16" fill="#2434a0" opacity="0.8"/><ellipse cx="32" cy="45" rx="4" ry="16" fill="#2434a0" opacity="0.8"/><ellipse cx="18" cy="82" rx="9" ry="20" fill="#182070" opacity="1"/></g></g></svg>
<svg class="a" style="left:514.5px;top:413.5px;overflow:visible" width="36" height="108" viewBox="0 0 36 108"><g clip-path="url(#bodyclip)"><rect x="-2" y="-2" width="40" height="112" fill="#0a0810"/><g filter="url(#blur)"><ellipse cx="18" cy="8" rx="6" ry="8" fill="#ff5a14" opacity="1"/><ellipse cx="18" cy="30" rx="5" ry="6" fill="#d02812" opacity="1"/><ellipse cx="18" cy="76" rx="9" ry="16" fill="#1c2a90" opacity="1"/><ellipse cx="18" cy="100" rx="9" ry="8" fill="#2030a0" opacity="1"/></g></g></svg>
<div class="a" style="left:581px;top:415px;width:3px;height:107px;background:linear-gradient(180deg,#fff7a0 0%,#ffc020 12%,#e03010 30%,#200808 45%,#000 50%,#0a1040 58%,#2a40c0 75%,#40a0f0 90%,#a0e0ff 100%)"></div>
<div class="a t" style="left:585.5px;top:412.5px;font-size:4.6px;color:#8a8a8a">15</div>
<div class="a t" style="left:585.5px;top:430.1px;font-size:4.6px;color:#8a8a8a">10</div>
<div class="a t" style="left:585.5px;top:447.7px;font-size:4.6px;color:#8a8a8a">5</div>
<div class="a t" style="left:585.5px;top:465.3px;font-size:4.6px;color:#8a8a8a">0</div>
<div class="a t" style="left:585.5px;top:482.9px;font-size:4.6px;color:#8a8a8a">-5</div>
<div class="a t" style="left:585.5px;top:500.5px;font-size:4.6px;color:#8a8a8a">-10</div>
<div class="a t" style="left:585.5px;top:518.1px;font-size:4.6px;color:#8a8a8a">-15</div>
<svg class="a" style="left:590px;top:375px" width="135" height="175" viewBox="0 0 135 175"><defs><filter id="bld"><feGaussianBlur stdDeviation="0.7"/></filter></defs><g filter="url(#bld)"><path d="M8 28L30 22L50 12L63 9L76 12L96 22L118 28V172H8Z" fill="#dcdcdc"/><path d="M26 46H100V172H26Z" fill="#dedede"/><path d="M8 28H118V46H8Z" fill="#d9d9d9"/><path d="M112 30H128V172H112Z" fill="#dddddd"/><rect x="38" y="47" width="50" height="1.6" fill="#d2d2d2"/><rect x="38" y="57" width="50" height="1.6" fill="#d2d2d2"/><rect x="38" y="67" width="50" height="1.6" fill="#d2d2d2"/><rect x="38" y="90" width="50" height="1.6" fill="#d2d2d2"/><rect x="38" y="99" width="50" height="1.6" fill="#d2d2d2"/><rect x="38" y="110" width="50" height="1.6" fill="#d2d2d2"/><rect x="38" y="118" width="50" height="1.6" fill="#d2d2d2"/><rect x="38" y="131" width="50" height="1.6" fill="#d2d2d2"/><rect x="38" y="140" width="50" height="1.6" fill="#d2d2d2"/><rect x="38" y="150" width="50" height="1.6" fill="#d2d2d2"/><rect x="38" y="46" width="1.2" height="126" fill="#d6d6d6"/><rect x="55" y="46" width="1.2" height="126" fill="#d6d6d6"/><rect x="72" y="46" width="1.2" height="126" fill="#d6d6d6"/><rect x="88" y="46" width="1.2" height="126" fill="#d6d6d6"/><rect x="12" y="60" width="10" height="2" fill="#d0d0d0"/><rect x="104" y="60" width="10" height="2" fill="#d0d0d0"/><rect x="12" y="100" width="10" height="2" fill="#d0d0d0"/><rect x="104" y="100" width="10" height="2" fill="#d0d0d0"/><rect x="12" y="130" width="10" height="2" fill="#d0d0d0"/><rect x="104" y="130" width="10" height="2" fill="#d0d0d0"/><rect x="12" y="160" width="10" height="2" fill="#d0d0d0"/><rect x="104" y="160" width="10" height="2" fill="#d0d0d0"/></g></svg>
<div class="a t" style="left:596px;top:524px;font-size:6px;color:#333">立</div>
<div class="a t" style="left:602.5px;top:519.5px;font-size:14px;color:#111;letter-spacing:1.6px;transform:skewX(-6deg);-webkit-text-stroke:0.1px #111">臺灣師範大學</div>
<div class="a t" style="left:597px;top:535.3px;font-size:4.5px;color:#2a2a2a;font-weight:bold;letter-spacing:0.9px">AL TAIWAN NORMAL UNIVERSITY</div>
<div class="a t" style="left:265px;top:530.6px;font-size:5.1px;color:#acacac;width:285px;overflow:hidden">People drew maps of body locations where they feel basic emotions (top row) and more complex ones (bottom row). Hot</div>
<div class="a t" style="left:265px;top:539.2px;font-size:5.1px;color:#acacac;width:285px;overflow:hidden">colors show regions that people say are stimulated during the emotion. Cool colors indicate deactivated areas.</div>
<div class="a t" style="left:265px;top:547.8px;font-size:5.1px;color:#acacac;width:285px;overflow:hidden">Image courtesy of Lauri Nummenmaa, Enrico Glerean, Riitta Hari, and Jari Hietanen.</div>
<div class="a" style="left:119.2px;top:546.5px;width:132.5px;height:13.5px;background:#bf3a38"></div>
<div class="a" style="left:251px;top:556.7px;width:346px;height:3.3px;background:#bf3a38"></div>
<div class="a" style="left:596.9px;top:546.5px;width:118px;height:13.1px;background:#bf3a38"></div>
<div class="a" style="left:250.8px;top:546.5px;width:1.4px;height:13px;background:#bf3a38"></div>
<svg class="a" style="left:396.5px;top:384px" width="8" height="12" viewBox="0 0 8 12"><path d="M0.6 0.6V9.6L2.9 7.6L4.6 11.2L6 10.5L4.4 7H7.4Z" fill="#fff" stroke="#333" stroke-width="0.7" stroke-linejoin="round"/></svg>
<div class="a" style="left:170.3px;top:546.5px;width:2.3px;height:2.1px;background:#e1e1e1"></div>
<div class="a" style="left:174.8px;top:546.5px;width:2.3px;height:2.1px;background:#e1e1e1"></div>
<div class="a" style="left:170.3px;top:551.3px;width:2.3px;height:3.4px;background:#e1e1e1"></div>
<div class="a" style="left:174.8px;top:551.3px;width:2.3px;height:3.4px;background:#e1e1e1"></div>
<div class="a" style="left:170.3px;top:558px;width:2.3px;height:2.0px;background:#e1e1e1"></div>
<div class="a" style="left:174.8px;top:558px;width:2.3px;height:2.0px;background:#e1e1e1"></div>
<div class="a" style="left:200.8px;top:546.5px;width:5.5px;height:3.4px;background:#e1e1e1"></div>
<div class="a" style="left:200.8px;top:556.7px;width:5.5px;height:3.3px;background:#e1e1e1"></div>
<div class="a" style="left:210.3px;top:546.5px;width:5.5px;height:3.4px;background:#e1e1e1"></div>
<div class="a" style="left:210.3px;top:556.7px;width:5.5px;height:3.3px;background:#e1e1e1"></div>
<div class="a" style="left:215.8px;top:546.5px;width:8.1px;height:6.1px;background:#e1e1e1"></div>
<div class="a" style="left:232px;top:546.5px;width:8.8px;height:6.1px;background:#e1e1e1"></div>
<div class="a" style="left:600.4px;top:546.5px;width:3.6px;height:3.6px;background:#e1e1e1"></div>
<div class="a" style="left:600.4px;top:556px;width:3.6px;height:3.6px;background:#e1e1e1"></div>
<div class="a" style="left:609.3px;top:546.5px;width:4.2px;height:3.6px;background:#e1e1e1"></div>
<div class="a" style="left:609.3px;top:556px;width:4.2px;height:3.6px;background:#e1e1e1"></div>
<div class="a" style="left:614.5px;top:552px;width:1.8px;height:2.5px;background:#e1e1e1"></div>
<div class="a" style="left:617.8px;top:552px;width:1.8px;height:2.5px;background:#e1e1e1"></div>
<div class="a" style="left:671px;top:552px;width:1.8px;height:2.5px;background:#e1e1e1"></div>
<div class="a" style="left:674.3px;top:552px;width:1.7px;height:2.5px;background:#e1e1e1"></div>
<div class="a" style="left:676.3px;top:546.5px;width:3.6px;height:3.6px;background:#e1e1e1"></div>
<div class="a" style="left:676.3px;top:556px;width:3.6px;height:3.6px;background:#e1e1e1"></div>
<div class="a" style="left:685.8px;top:546.5px;width:3.6px;height:3.6px;background:#e1e1e1"></div>
<div class="a" style="left:685.8px;top:556px;width:3.6px;height:3.6px;background:#e1e1e1"></div>
<div class="a" style="left:689.4px;top:546.5px;width:9.5px;height:7.1px;background:#e1e1e1"></div>
<div class="a" style="left:706px;top:546.5px;width:8.9px;height:7.1px;background:#e1e1e1"></div>
<div class="a" style="left:3px;top:591px;width:805px;height:13.5px;background:#e7e5e4;border-top:1px solid #dedcdb"></div>
<div class="a t" style="left:6px;top:594.8px;font-size:7px;letter-spacing:0.1px;color:#777">投影片 95 / 247</div>
<svg class="a" style="left:677px;top:594px" width="6" height="8" viewBox="0 0 6 8"><path d="M4.8 0.6L1.4 4L4.8 7.4" fill="none" stroke="#666" stroke-width="0.9"/></svg>
<div class="a" style="left:693px;top:593.5px;width:7.5px;height:9.5px;background:#9a9a9a;border:0.8px solid #777;border-radius:1px"></div>
<svg class="a" style="left:711px;top:594px" width="6" height="8" viewBox="0 0 6 8"><path d="M1.2 0.6L4.6 4L1.2 7.4" fill="none" stroke="#666" stroke-width="0.9"/></svg>
<svg class="a" style="left:734px;top:593.5px" width="9" height="9" viewBox="0 0 9 9" fill="none" stroke="#666" stroke-width="0.8"><rect x="0.5" y="0.5" width="8" height="7.5"/><rect x="2.5" y="2" width="4" height="3"/><path d="M2 6.5H8"/></svg>
<svg class="a" style="left:754px;top:593.5px" width="9" height="9" viewBox="0 0 9 9" fill="none" stroke="#666" stroke-width="0.8"><rect x="0.5" y="0.5" width="3" height="3"/><rect x="5.5" y="0.5" width="3" height="3"/><rect x="0.5" y="5.5" width="3" height="3"/><rect x="5.5" y="5.5" width="3" height="3"/></svg>
<div class="a" style="left:770px;top:592px;width:18px;height:12px;background:#dad8d7"></div>
<svg class="a" style="left:774px;top:593.5px" width="9" height="9" viewBox="0 0 9 9" fill="none" stroke="#666" stroke-width="0.8"><path d="M0.5 1.5L4.5 0.8V8.2L0.5 8.5ZM8.5 1.5L4.5 0.8V8.2L8.5 8.5Z"/><path d="M2 3V6M7 3V6"/></svg>
<svg class="a" style="left:794px;top:593.5px" width="9" height="9" viewBox="0 0 9 9" fill="none" stroke="#666" stroke-width="0.8"><path d="M1 0.8H8M1.5 0.8V4.5H7.5V0.8M4.5 4.5V8.2M2.5 8.2H6.5M3 2.5H6"/></svg>
<div class="a" style="left:3px;top:604.5px;width:805px;height:20.5px;background:linear-gradient(90deg,#c9d4dc 0%,#d0dde6 22%,#cfdde7 30%,#d0dfe9 60%,#cbdce8 100%)"></div>
<div class="a" style="left:246.5px;top:605px;width:25.5px;height:20px;background:#3b4a66"></div>
<svg class="a" style="left:255px;top:610px" width="9" height="9" viewBox="0 0 9 9" fill="none" stroke="#9aa6bb" stroke-width="0.8"><path d="M2 0.5V7H8.5M0.5 2H7V8.5"/></svg>
<div class="a" style="left:272px;top:605px;width:131px;height:20px;background:#e4e4e3"></div>
<div class="a" style="left:279px;top:605px;width:23px;height:20px;overflow:hidden"><div class="a" style="left:0;top:-1.5px;width:23px;height:23px;border-radius:50%;background:#fbe04c"></div></div>
<div class="a" style="left:288px;top:611px;width:5px;height:5px;background:#e07a20;border-radius:1px"></div>
<div class="a t" style="left:308.5px;top:609px;font-size:5px;letter-spacing:0.35px;color:#333;-webkit-text-stroke:0.1px #333">國教院SEL子計畫四</div>
<div class="a t" style="left:308.5px;top:617.5px;font-size:5px;color:#a0a0a0">3月1日 24:10 更新</div>
<svg class="a" style="left:391px;top:611px" width="4" height="5" viewBox="0 0 4 5"><path d="M1 0.5L3 2.5L1 4.5" fill="none" stroke="#888" stroke-width="0.6"/></svg>
<div class="a" style="left:374px;top:605px;width:22px;height:20px;overflow:hidden"><div class="a" style="left:0;top:13px;width:22px;height:22px;border-radius:50%;background:#1ea446"></div></div>
<div class="a" style="left:403px;top:605px;width:1px;height:20px;background:#b8c4cc"></div>
<svg class="a" style="left:405px;top:604.5px" width="110" height="20" viewBox="0 0 110 20"><rect x="5" y="5" width="10" height="10" rx="1" fill="#e8352c"/><path d="M7 10.5C8 9 9 11 10 9.5S12 11 13.5 8.5" stroke="#fff" stroke-width="0.8" fill="none"/><rect x="23.7" y="5" width="10" height="10" rx="2" fill="#0c1a33"/><path d="M28.2 7.5A2.6 2.6 0 1 0 28.2 12.5M30 7.5A2.6 2.6 0 1 1 30 12.5" stroke="#3aa0f0" stroke-width="1.1" fill="none"/><circle cx="47.4" cy="10" r="4.6" fill="#8c9bb8"/><circle cx="47.4" cy="10" r="3.2" fill="#b8c4d8"/><circle cx="47.4" cy="10" r="1.7" fill="#2a58c0"/><circle cx="65.7" cy="10.3" r="8" fill="#f0c2b2" opacity=".85"/><rect x="60.7" y="5" width="10" height="10" rx="2.2" fill="#22b33a"/><ellipse cx="65.7" cy="9.8" rx="3.6" ry="2.8" fill="#fff"/><rect x="61" y="17" width="9.5" height="1.1" fill="#d24a3a"/><circle cx="87.5" cy="6.5" r="1.6" fill="#7b83eb"/><rect x="85.5" y="8.5" width="4.5" height="6" rx="1.5" fill="#7b83eb"/><circle cx="83.5" cy="6" r="1.8" fill="#5b5fc7"/><rect x="79.2" y="7.5" width="7.5" height="7.5" rx="1" fill="#5059c9"/><path d="M81 9.5H85M83 9.5V13.5" stroke="#fff" stroke-width="0.9"/><circle cx="103.5" cy="10" r="5" fill="#e8582a"/><rect x="97.5" y="7" width="6" height="6" rx="0.8" fill="#c43a18"/><path d="M99.5 12V8.2H101C101.8 8.2 102.2 8.7 102.2 9.3S101.8 10.4 101 10.4H99.5" stroke="#fff" stroke-width="0.7" fill="none"/></svg>
<div class="a t" style="left:760px;top:608.5px;width:41px;text-align:right;font-size:5px;color:#777">下午 23:12</div>
<div class="a t" style="left:760px;top:615.5px;width:41px;text-align:right;font-size:5px;color:#777">2025/12/12</div>
<div class="a" style="left:8px;top:611px;width:72px;height:15px;border-radius:3px;background:rgba(90,90,90,0.85)"></div>
<div class="a t" style="left:12px;top:614.5px;font-size:7px;color:#fff">陳學志</div>
<svg class="a" style="left:37px;top:614px" width="9" height="9" viewBox="0 0 9 9"><circle cx="3.2" cy="2.6" r="1.6" fill="#fff"/><path d="M0.5 7.5C0.5 5.8 1.6 4.8 3.2 4.8S5.5 5.5 5.8 6" fill="#fff"/><circle cx="6.3" cy="6.3" r="2.3" fill="#fff"/></svg>
<div class="a" style="left:51px;top:618px;width:6px;height:0.8px;background:#aaa"></div>
<div class="a" style="left:65px;top:618px;width:7px;height:0.9px;background:#fff"></div>
<div class="a" style="left:68px;top:614.5px;width:0.9px;height:7px;background:#fff"></div>
<!--/PPT-->

<!-- PANEL -->
<div id="panel" class="a">
<!--PANEL-->
<div class="a" style="left:0;top:35.5px;width:369px;height:1px;background:#e1e1e1"></div>
<svg class="a" style="left:16px;top:15px" width="6" height="9" viewBox="0 0 6 9"><path d="M5 0.8L1.3 4.5L5 8.2" fill="none" stroke="#424242" stroke-width="0.9"/></svg>
<div class="a t" style="left:30px;top:15px;font-size:8px;letter-spacing:0.3px;color:#242424;-webkit-text-stroke:0.25px #242424">在這個會議 <span style="-webkit-text-stroke:0;color:#616161;letter-spacing:0">(49)</span></div>
<div class="a" style="left:263.5px;top:12.3px;width:72px;height:14px;background:#fff;border:1px solid #e0e0e0;border-radius:3px;box-shadow:0 0.5px 1px rgba(0,0,0,.12)"></div>
<div class="a t" style="left:263.5px;top:16px;width:72px;text-align:center;font-size:7px;letter-spacing:0.3px;color:#242424;-webkit-text-stroke:0.1px #242424">將所有人設為靜音</div>
<svg class="a" style="left:342px;top:14.5px" width="9" height="9" viewBox="0 0 9 9"><path d="M0.7 0.7L8.3 8.3M8.3 0.7L0.7 8.3" stroke="#424242" stroke-width="0.9"/></svg>
<div class="row" style="top:47.00px"><div class="av" style="background:#cde8d9;color:#2f6b46">秘</div><div class="nm">秘書室信箱</div><div class="a" style="left:334.5px;top:6.6px"><svg width="12.6" height="12.6" viewBox="0 0 14 14" fill="none" stroke="#242424" stroke-width="1.1"><rect x="5.8" y="3.3" width="3.6" height="7" rx="1.8"/><path d="M4.1 8.4C4.1 10.6 5.7 11.9 7.6 11.9S11.1 10.6 11.1 8.4M7.6 11.9V13.4" stroke-width="0.9"/><path d="M2.6 3.2L12.4 13" stroke="#f5f5f5" stroke-width="2"/><path d="M2.6 3.2L12.4 13" stroke-width="0.95"/></svg></div></div>
<div class="row" style="top:76.50px"><div class="av" style="background:#dfe3da;color:#4b5a49">王</div><div class="nm">王怡樺</div><div class="a" style="left:334.5px;top:6.6px"><svg width="12.6" height="12.6" viewBox="0 0 14 14" fill="none" stroke="#242424" stroke-width="1.1"><rect x="5.8" y="3.3" width="3.6" height="7" rx="1.8"/><path d="M4.1 8.4C4.1 10.6 5.7 11.9 7.6 11.9S11.1 10.6 11.1 8.4M7.6 11.9V13.4" stroke-width="0.9"/><path d="M2.6 3.2L12.4 13" stroke="#f5f5f5" stroke-width="2"/><path d="M2.6 3.2L12.4 13" stroke-width="0.95"/></svg></div></div>
<div class="row" style="top:106.00px"><div class="av" style="background:#dfe3da;color:#4b5a49">申</div><div class="nm">申永順</div><div class="a" style="left:334.5px;top:6.6px"><svg width="12.6" height="12.6" viewBox="0 0 14 14" fill="none" stroke="#242424" stroke-width="1.1"><rect x="5.8" y="3.3" width="3.6" height="7" rx="1.8"/><path d="M4.1 8.4C4.1 10.6 5.7 11.9 7.6 11.9S11.1 10.6 11.1 8.4M7.6 11.9V13.4" stroke-width="0.9"/><path d="M2.6 3.2L12.4 13" stroke="#f5f5f5" stroke-width="2"/><path d="M2.6 3.2L12.4 13" stroke-width="0.95"/></svg></div></div>
<div class="row" style="top:135.50px"><svg class="a" style="left:12.5px;top:5px" width="19.5" height="19.5" viewBox="0 0 19.5 19.5"><defs><clipPath id="pc1"><circle cx="9.75" cy="9.75" r="9.75"/></clipPath><filter id="pb1"><feGaussianBlur stdDeviation="0.5"/></filter></defs><g clip-path="url(#pc1)"><g filter="url(#pb1)"><rect width="19.5" height="19.5" fill="#d8d4d0"/><rect x="7" y="0" width="8" height="6" fill="#cfcac4"/><ellipse cx="5" cy="9" rx="5" ry="6" fill="#b08878"/><rect x="0" y="3" width="8" height="3" fill="#5a4a40"/><path d="M0 14H9V19.5H0Z" fill="#8ea4c0"/><path d="M8 9H11V19.5H8Z" fill="#1e2230"/><ellipse cx="12.5" cy="9" rx="3" ry="4" fill="#a87a68"/><path d="M10 12H19.5V19.5H10Z" fill="#7a5a34"/><path d="M14 5H19.5V14H14Z" fill="#8a6a44"/><rect x="17" y="6" width="2.5" height="8" fill="#3a3030"/></g></g></svg><div class="nm">江怡逸</div><div class="a" style="left:334.5px;top:6.6px"><svg width="12.6" height="12.6" viewBox="0 0 14 14" fill="none" stroke="#242424" stroke-width="1.1"><rect x="5.8" y="3.3" width="3.6" height="7" rx="1.8"/><path d="M4.1 8.4C4.1 10.6 5.7 11.9 7.6 11.9S11.1 10.6 11.1 8.4M7.6 11.9V13.4" stroke-width="0.9"/><path d="M2.6 3.2L12.4 13" stroke="#f5f5f5" stroke-width="2"/><path d="M2.6 3.2L12.4 13" stroke-width="0.95"/></svg></div></div>
<div class="row" style="top:165.00px"><div class="av" style="background:#dfe3da;color:#4b5a49">江</div><div class="nm">江若琦</div><div class="a" style="left:334.5px;top:6.6px"><svg width="12.6" height="12.6" viewBox="0 0 14 14" fill="none" stroke="#242424" stroke-width="1.1"><rect x="5.8" y="3.3" width="3.6" height="7" rx="1.8"/><path d="M4.1 8.4C4.1 10.6 5.7 11.9 7.6 11.9S11.1 10.6 11.1 8.4M7.6 11.9V13.4" stroke-width="0.9"/><path d="M2.6 3.2L12.4 13" stroke="#f5f5f5" stroke-width="2"/><path d="M2.6 3.2L12.4 13" stroke-width="0.95"/></svg></div></div>
<div class="row" style="top:194.50px"><div class="av" style="background:#c9d6ec;color:#35558f">江</div><div class="nm">江虹瑩</div><div class="a" style="left:334.5px;top:6.6px"><svg width="12.6" height="12.6" viewBox="0 0 14 14" fill="none" stroke="#242424" stroke-width="1.1"><rect x="5.8" y="3.3" width="3.6" height="7" rx="1.8"/><path d="M4.1 8.4C4.1 10.6 5.7 11.9 7.6 11.9S11.1 10.6 11.1 8.4M7.6 11.9V13.4" stroke-width="0.9"/><path d="M2.6 3.2L12.4 13" stroke="#f5f5f5" stroke-width="2"/><path d="M2.6 3.2L12.4 13" stroke-width="0.95"/></svg></div></div>
<div class="row" style="top:224.00px"><div class="av" style="background:#cde8d9;color:#2f6b46">何</div><div class="nm">何佳芸</div><div class="a" style="left:334.5px;top:6.6px"><svg width="12.6" height="12.6" viewBox="0 0 14 14" fill="none" stroke="#242424" stroke-width="1.1"><rect x="5.8" y="3.3" width="3.6" height="7" rx="1.8"/><path d="M4.1 8.4C4.1 10.6 5.7 11.9 7.6 11.9S11.1 10.6 11.1 8.4M7.6 11.9V13.4" stroke-width="0.9"/><path d="M2.6 3.2L12.4 13" stroke="#f5f5f5" stroke-width="2"/><path d="M2.6 3.2L12.4 13" stroke-width="0.95"/></svg></div></div>
<div class="row" style="top:253.50px"><div class="av" style="background:#fae9c6;color:#7a5b24">余</div><div class="nm">余俐瑩</div><div class="a" style="left:334.5px;top:6.6px"><svg width="12.6" height="12.6" viewBox="0 0 14 14" fill="none" stroke="#242424" stroke-width="1.1"><rect x="5.8" y="3.3" width="3.6" height="7" rx="1.8"/><path d="M4.1 8.4C4.1 10.6 5.7 11.9 7.6 11.9S11.1 10.6 11.1 8.4M7.6 11.9V13.4" stroke-width="0.9"/><path d="M2.6 3.2L12.4 13" stroke="#f5f5f5" stroke-width="2"/><path d="M2.6 3.2L12.4 13" stroke-width="0.95"/></svg></div></div>
<div class="row" style="top:283.00px"><svg class="a" style="left:12.5px;top:5px" width="19.5" height="19.5" viewBox="0 0 19.5 19.5"><defs><filter id="pb2"><feGaussianBlur stdDeviation="0.35"/></filter></defs><circle cx="9.75" cy="9.75" r="9.75" fill="#fff"/><g filter="url(#pb2)"><path d="M6.2 11.5H13.3V16.2H6.2Z" fill="#c8a0a8"/><path d="M5.5 16.3C5.8 13 7.5 11.8 9.75 11.8S13.7 13 14 16.3Z" fill="#d8b0b8"/><path d="M7 12.5C6.8 8 7 4 9.75 3.5C12.5 4 12.7 8 12.5 12.5Z" fill="#2a2222"/><ellipse cx="9.9" cy="7.2" rx="1.3" ry="2.1" fill="#f4e6e0"/><path d="M9.2 9.5H10.6V12H9.2Z" fill="#f0d8d0"/></g></svg><div class="nm">余瓏蓉</div><div class="a" style="left:334.5px;top:6.6px"><svg width="12.6" height="12.6" viewBox="0 0 14 14" fill="none" stroke="#242424" stroke-width="1.1"><rect x="5.8" y="3.3" width="3.6" height="7" rx="1.8"/><path d="M4.1 8.4C4.1 10.6 5.7 11.9 7.6 11.9S11.1 10.6 11.1 8.4M7.6 11.9V13.4" stroke-width="0.9"/><path d="M2.6 3.2L12.4 13" stroke="#f5f5f5" stroke-width="2"/><path d="M2.6 3.2L12.4 13" stroke-width="0.95"/></svg></div></div>
<div class="row" style="top:312.50px"><div class="av" style="background:#cde8d9;color:#2f6b46">吳</div><div class="nm">吳子維</div><div class="a" style="left:334.5px;top:6.6px"><svg width="12.6" height="12.6" viewBox="0 0 14 14" fill="none" stroke="#242424" stroke-width="1.1"><rect x="5.8" y="3.3" width="3.6" height="7" rx="1.8"/><path d="M4.1 8.4C4.1 10.6 5.7 11.9 7.6 11.9S11.1 10.6 11.1 8.4M7.6 11.9V13.4" stroke-width="0.9"/><path d="M2.6 3.2L12.4 13" stroke="#f5f5f5" stroke-width="2"/><path d="M2.6 3.2L12.4 13" stroke-width="0.95"/></svg></div></div>
<div class="row" style="top:342.00px"><div class="av" style="background:#ebdcd7;color:#6e4f45">吳</div><div class="nm">吳佳甄</div><div class="a" style="left:334.5px;top:6.6px"><svg width="12.6" height="12.6" viewBox="0 0 14 14" fill="none" stroke="#242424" stroke-width="1.1"><rect x="5.8" y="3.3" width="3.6" height="7" rx="1.8"/><path d="M4.1 8.4C4.1 10.6 5.7 11.9 7.6 11.9S11.1 10.6 11.1 8.4M7.6 11.9V13.4" stroke-width="0.9"/><path d="M2.6 3.2L12.4 13" stroke="#f5f5f5" stroke-width="2"/><path d="M2.6 3.2L12.4 13" stroke-width="0.95"/></svg></div></div>
<div class="row" style="top:371.50px"><div class="av" style="background:#dfe3da;color:#4b5a49">吳</div><div class="nm">吳怡真</div><div class="a" style="left:334.5px;top:6.6px"><svg width="12.6" height="12.6" viewBox="0 0 14 14" fill="none" stroke="#242424" stroke-width="1.1"><rect x="5.8" y="3.3" width="3.6" height="7" rx="1.8"/><path d="M4.1 8.4C4.1 10.6 5.7 11.9 7.6 11.9S11.1 10.6 11.1 8.4M7.6 11.9V13.4" stroke-width="0.9"/><path d="M2.6 3.2L12.4 13" stroke="#f5f5f5" stroke-width="2"/><path d="M2.6 3.2L12.4 13" stroke-width="0.95"/></svg></div></div>
<div class="row" style="top:401.00px"><svg class="a" style="left:12.5px;top:5px" width="19.5" height="19.5" viewBox="0 0 19.5 19.5"><defs><filter id="pb3"><feGaussianBlur stdDeviation="0.4"/></filter></defs><circle cx="9.75" cy="9.75" r="9.75" fill="#fff"/><g filter="url(#pb3)"><path d="M12.5 1L18.5 5.5L13 7Z" fill="#f08060"/><ellipse cx="6.8" cy="12" rx="5.4" ry="6.8" transform="rotate(30 6.8 12)" fill="#2a1a16"/><ellipse cx="8" cy="11.4" rx="3.6" ry="4.6" transform="rotate(30 8 11.4)" fill="#f0d6c6"/><path d="M3 9C5 6 8 5.5 11 7" stroke="#2a1a16" stroke-width="1.6" fill="none"/></g></svg><div class="nm">吳淑玲</div><div class="a" style="left:334.5px;top:6.6px"><svg width="12.6" height="12.6" viewBox="0 0 14 14" fill="none" stroke="#242424" stroke-width="1.1"><rect x="5.8" y="3.3" width="3.6" height="7" rx="1.8"/><path d="M4.1 8.4C4.1 10.6 5.7 11.9 7.6 11.9S11.1 10.6 11.1 8.4M7.6 11.9V13.4" stroke-width="0.9"/><path d="M2.6 3.2L12.4 13" stroke="#f5f5f5" stroke-width="2"/><path d="M2.6 3.2L12.4 13" stroke-width="0.95"/></svg></div></div>
<div class="row" style="top:430.50px"><div class="av" style="background:#cde8d9;color:#2f6b46">吳</div><div class="nm">吳德玉</div><div class="a" style="left:334.5px;top:6.6px"><svg width="12.6" height="12.6" viewBox="0 0 14 14" fill="none" stroke="#242424" stroke-width="1.1"><rect x="5.8" y="3.3" width="3.6" height="7" rx="1.8"/><path d="M4.1 8.4C4.1 10.6 5.7 11.9 7.6 11.9S11.1 10.6 11.1 8.4M7.6 11.9V13.4" stroke-width="0.9"/><path d="M2.6 3.2L12.4 13" stroke="#f5f5f5" stroke-width="2"/><path d="M2.6 3.2L12.4 13" stroke-width="0.95"/></svg></div></div>
<div class="row" style="top:460.00px"><div class="av" style="background:#fae9c6;color:#7a5b24">李</div><div class="nm">李思穎</div><svg class="a" style="left:70px;top:10px;position:absolute" width="9" height="9" viewBox="0 0 10 10"><circle cx="3.6" cy="3" r="1.8" fill="#242424"/><path d="M0.6 8.5C0.6 6.6 1.8 5.5 3.6 5.5S6.2 6.2 6.5 6.8L6.5 9H0.6Z" fill="#242424"/><circle cx="7" cy="7" r="2.6" fill="#242424"/><path d="M7 5.6V8.2M6 7.2L7 8.2L8 7.2" stroke="#fff" stroke-width="0.7" fill="none"/></svg><div class="a" style="left:334.5px;top:6.6px"><svg width="12.6" height="12.6" viewBox="0 0 14 14" fill="none" stroke="#242424" stroke-width="1.1"><rect x="5.8" y="3.3" width="3.6" height="7" rx="1.8"/><path d="M4.1 8.4C4.1 10.6 5.7 11.9 7.6 11.9S11.1 10.6 11.1 8.4M7.6 11.9V13.4" stroke-width="0.9"/><path d="M2.6 3.2L12.4 13" stroke="#f5f5f5" stroke-width="2"/><path d="M2.6 3.2L12.4 13" stroke-width="0.95"/></svg></div></div>
<div class="row" style="top:489.50px"><div class="av" style="background:#f3d5d8;color:#9c3e4b">李</div><div class="nm">李薇</div><div class="a" style="left:334.5px;top:6.6px"><svg width="12.6" height="12.6" viewBox="0 0 14 14" fill="none" stroke="#242424" stroke-width="1.1"><rect x="5.8" y="3.3" width="3.6" height="7" rx="1.8"/><path d="M4.1 8.4C4.1 10.6 5.7 11.9 7.6 11.9S11.1 10.6 11.1 8.4M7.6 11.9V13.4" stroke-width="0.9"/><path d="M2.6 3.2L12.4 13" stroke="#f5f5f5" stroke-width="2"/><path d="M2.6 3.2L12.4 13" stroke-width="0.95"/></svg></div></div>
<div class="row" style="top:519.00px"><div class="av" style="background:#f5d3e0;color:#a43c70">周</div><div class="nm">周芳綺</div><div class="a" style="left:334.5px;top:6.6px"><svg width="12.6" height="12.6" viewBox="0 0 14 14" fill="none" stroke="#242424" stroke-width="1.1"><rect x="5.8" y="3.3" width="3.6" height="7" rx="1.8"/><path d="M4.1 8.4C4.1 10.6 5.7 11.9 7.6 11.9S11.1 10.6 11.1 8.4M7.6 11.9V13.4" stroke-width="0.9"/><path d="M2.6 3.2L12.4 13" stroke="#f5f5f5" stroke-width="2"/><path d="M2.6 3.2L12.4 13" stroke-width="0.95"/></svg></div></div>
<div class="row" style="top:548.50px"><div class="av" style="background:#f3d5d8;color:#9c3e4b">林</div><div class="nm">林</div><div class="a" style="left:334.5px;top:6.6px"><svg width="12.6" height="12.6" viewBox="0 0 14 14" fill="none" stroke="#242424" stroke-width="1.1"><rect x="5.8" y="3.3" width="3.6" height="7" rx="1.8"/><path d="M4.1 8.4C4.1 10.6 5.7 11.9 7.6 11.9S11.1 10.6 11.1 8.4M7.6 11.9V13.4" stroke-width="0.9"/><path d="M2.6 3.2L12.4 13" stroke="#f5f5f5" stroke-width="2"/><path d="M2.6 3.2L12.4 13" stroke-width="0.95"/></svg></div></div>
<!--/PANEL-->
</div>
</body>
</html>
